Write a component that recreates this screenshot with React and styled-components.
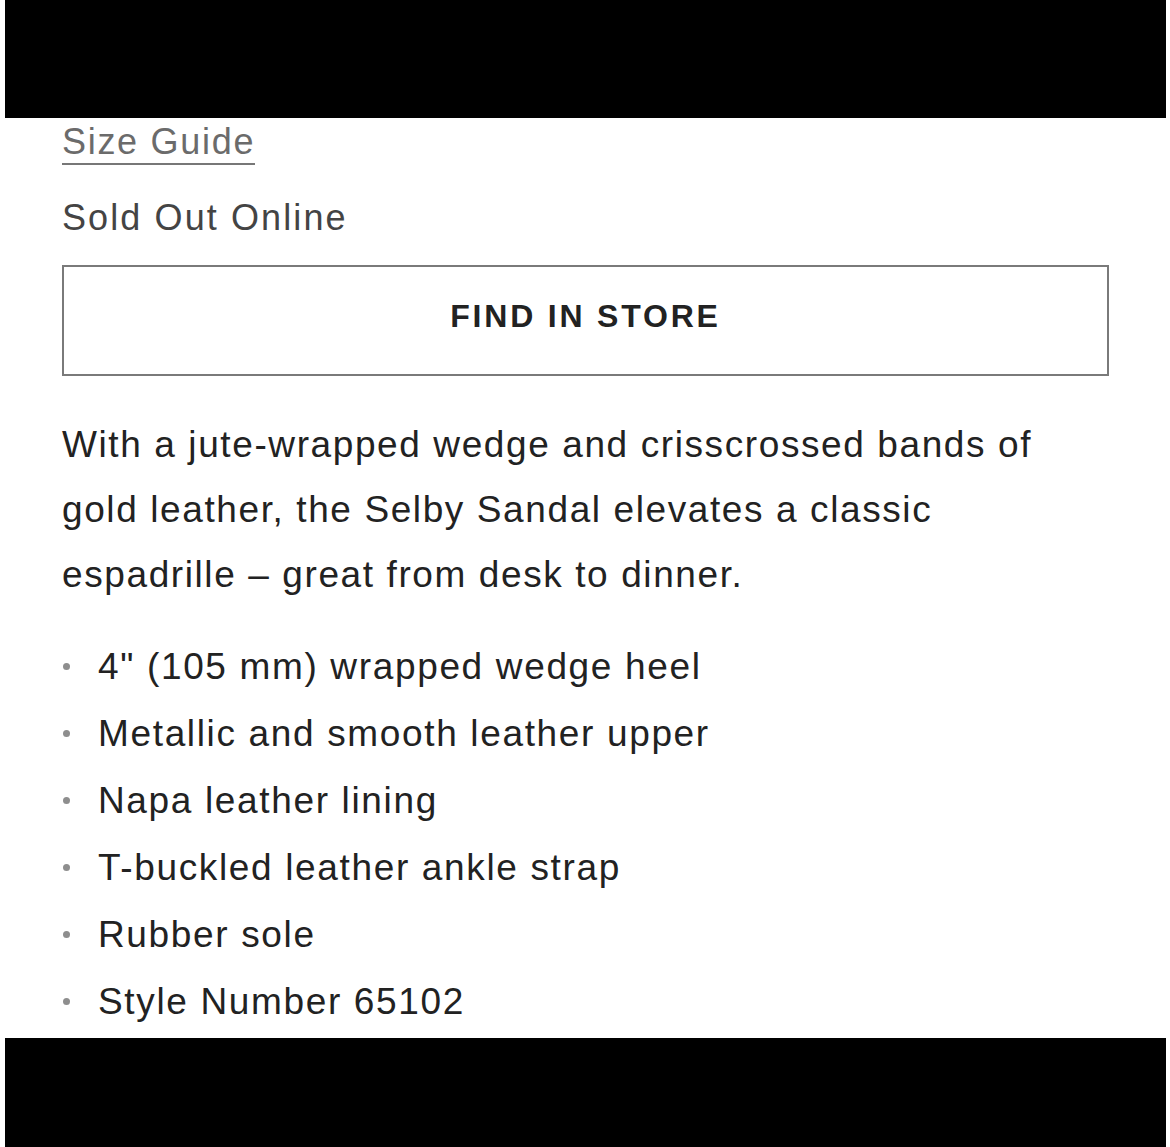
import React from "react";
import styled, { createGlobalStyle } from "styled-components";

const Global = createGlobalStyle`
  html, body { margin: 0; padding: 0; background: #fff; }
  body { font-family: "Liberation Sans", Arial, sans-serif; }
`;

const Frame = styled.div`
  width: 1161px;
  margin-left: 5px;
  height: 1147px;
  display: flex;
  flex-direction: column;
`;

const Bar = styled.div`
  background: #000;
  height: ${(p) => p.$h}px;
  flex: none;
`;

const Content = styled.div`
  flex: 1;
  background: #fff;
  padding: 0 57px;
  display: flex;
  flex-direction: column;
  overflow: hidden;
`;

const SizeLink = styled.a`
  align-self: flex-start;
  margin-top: 4px;
  font-size: 36px;
  line-height: 40px;
  color: #6b6b6b;
  letter-spacing: 1.7px;
  text-decoration: none;
  border-bottom: 2px solid #777;
  padding-bottom: 1px;
`;

const Status = styled.div`
  margin-top: 33px;
  font-size: 36px;
  line-height: 40px;
  color: #444;
  letter-spacing: 2.1px;
`;

const StoreButton = styled.button`
  margin-top: 27px;
  height: 111px;
  width: 100%;
  padding: 0 0 8px 0;
  background: #fff;
  border: 2px solid #7a7a7a;
  font-family: "Liberation Sans", Arial, sans-serif;
  font-weight: 700;
  font-size: 32px;
  letter-spacing: 2.8px;
  color: #222;
`;

const Description = styled.p`
  margin: 36px 0 0 0;
  font-size: 37px;
  line-height: 65px;
  color: #222;
  letter-spacing: 1.6px;
`;

const List = styled.ul`
  list-style: none;
  margin: 26px 0 0 0;
  padding: 0;
`;

const Item = styled.li`
  display: flex;
  align-items: center;
  font-size: 37px;
  line-height: 67px;
  color: #222;
  letter-spacing: 1.65px;
`;

const Dot = styled.span`
  width: 7px;
  height: 7px;
  border-radius: 50%;
  background: #8e8e8e;
  margin: 0 28px 0 1px;
  flex: none;
`;

const items = [
  '4" (105 mm) wrapped wedge heel',
  "Metallic and smooth leather upper",
  "Napa leather lining",
  "T-buckled leather ankle strap",
  "Rubber sole",
  "Style Number 65102",
];

export default function App() {
  return (
    <>
      <Global />
      <Frame>
        <Bar $h={118} />
        <Content>
          <SizeLink href="#">Size Guide</SizeLink>
          <Status>Sold Out Online</Status>
          <StoreButton>FIND IN STORE</StoreButton>
          <Description>
            With a jute-wrapped wedge and crisscrossed bands of gold leather, the Selby Sandal
            elevates a classic espadrille – great from desk to dinner.
          </Description>
          <List>
            {items.map((t) => (
              <Item key={t}>
                <Dot />
                {t}
              </Item>
            ))}
          </List>
        </Content>
        <Bar $h={109} />
      </Frame>
    </>
  );
}
